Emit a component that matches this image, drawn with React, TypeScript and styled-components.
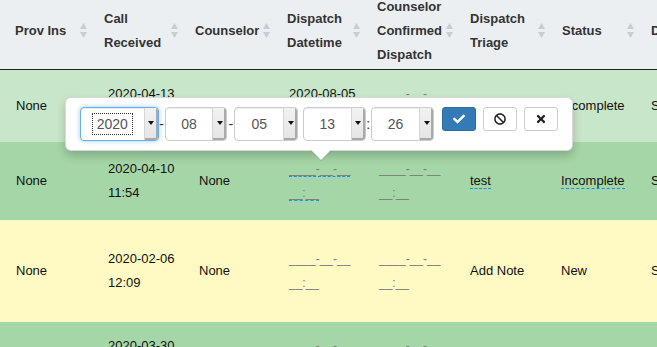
import { Fragment } from 'react';
import styled, { createGlobalStyle } from 'styled-components';
import { FaBan, FaCheck, FaTimes } from 'react-icons/fa';

const GlobalStyle = createGlobalStyle`
  html, body {
    margin: 0;
    padding: 0;
    overflow: hidden;
    background: #fff;
    font-family: 'Liberation Sans', Arial, Helvetica, sans-serif;
  }
`;

const Page = styled.div`
  position: relative;
  width: 100%;
`;

const HeaderRow = styled.div`
  display: grid;
  grid-template-columns: 92px 91px 92px 90px 93px 92px 89px 1fr;
  grid-template-rows: 69px;
  height: 70px;
  box-sizing: border-box;
  background: #eceff1;
  border-bottom: 1px solid #222;
`;

const HeaderCell = styled.div<{ $first?: boolean }>`
  display: flex;
  align-items: center;
  justify-content: space-between;
  min-height: 0;
  padding: 0 5px 8px ${(p) => (p.$first ? 15 : 12)}px;
  font-size: 13px;
  font-weight: 700;
  line-height: 24px;
  color: #333;
  white-space: nowrap;
  overflow: visible;
`;

const BodyRow = styled.div<{ $bg: string; $h: number }>`
  display: grid;
  grid-template-columns: 96px 91px 90px 90px 91px 91px 90px 1fr;
  grid-template-rows: ${(p) => p.$h}px;
  background: ${(p) => p.$bg};
`;

const Cell = styled.div<{ $first?: boolean }>`
  display: flex;
  align-items: center;
  padding-left: ${(p) => (p.$first ? 16 : 12)}px;
  font-size: 13px;
  line-height: 24px;
  color: #111;
  white-space: nowrap;
  overflow: hidden;
`;

const Placeholder = styled.span<{ $editable?: boolean }>`
  font-size: 12px;
  color: #7a7a7a;
  border-bottom: ${(p) => (p.$editable ? '1px dashed #1a8cf0' : 'none')};
`;

const Editable = styled.span`
  border-bottom: 1px dashed #1a8cf0;
`;

const Popover = styled.div`
  position: absolute;
  top: 97px;
  left: 65px;
  width: 508px;
  height: 54px;
  box-sizing: border-box;
  padding: 9px 14px;
  background: #fff;
  border: 1px solid rgba(0, 0, 0, 0.15);
  border-radius: 6px;
  box-shadow: 0 5px 10px rgba(0, 0, 0, 0.2);
  display: flex;
  align-items: flex-start;

  &::before {
    content: '';
    position: absolute;
    left: 244px;
    bottom: -11px;
    border-style: solid;
    border-width: 11px 11px 0 11px;
    border-color: rgba(0, 0, 0, 0.12) transparent transparent transparent;
  }

  &::after {
    content: '';
    position: absolute;
    left: 245px;
    bottom: -10px;
    border-style: solid;
    border-width: 10px 10px 0 10px;
    border-color: #fff transparent transparent transparent;
  }
`;

const Select = styled.div<{ $w: number; $focus?: boolean }>`
  display: flex;
  width: ${(p) => p.$w}px;
  height: 34px;
  box-sizing: border-box;
  border: 1px solid ${(p) => (p.$focus ? '#66afe9' : '#ccc')};
  border-radius: 4px;
  overflow: hidden;
  background: #fff;
  box-shadow: ${(p) =>
    p.$focus
      ? 'inset 0 1px 1px rgba(0,0,0,.075), 0 0 5px rgba(102,175,233,.6)'
      : 'inset 0 1px 1px rgba(0,0,0,.075)'};
`;

const SelectValue = styled.span`
  flex: 1;
  display: flex;
  align-items: center;
  justify-content: center;
  font-size: 14px;
  color: #555;
`;

const FocusRing = styled.span<{ $on?: boolean }>`
  padding: 2px 4px;
  outline: ${(p) => (p.$on ? '1px dotted #333' : 'none')};
`;

const SelectArrow = styled.span`
  width: 14px;
  display: flex;
  align-items: center;
  justify-content: center;
  padding-bottom: 2px;
  box-sizing: border-box;
  background: linear-gradient(#f2f2f2, #e4e4e4);
  border-left: 1px solid #d6d6d6;
  box-shadow: inset -2px -2px 0 #a9a9a9;

  &::after {
    content: '';
    border-style: solid;
    border-width: 4px 3px 0 3px;
    border-color: #111 transparent transparent transparent;
  }
`;

const Sep = styled.span<{ $w: number }>`
  width: ${(p) => p.$w}px;
  height: 34px;
  display: flex;
  align-items: center;
  justify-content: center;
  font-size: 14px;
  color: #333;
`;

const Btn = styled.button<{ $primary?: boolean }>`
  width: 34px;
  height: 24px;
  margin-left: ${(p) => (p.$primary ? 8 : 7)}px;
  padding: 0;
  display: flex;
  align-items: center;
  justify-content: center;
  border-radius: 3px;
  border: 1px solid ${(p) => (p.$primary ? '#2e6da4' : '#ccc')};
  background: ${(p) => (p.$primary ? '#337ab7' : '#fff')};
  color: ${(p) => (p.$primary ? '#fff' : '#222')};
`;

const SortIcon = () => (
  <svg width="7" height="15" viewBox="0 0 7 15">
    <polygon points="3.5,0 7,6 0,6" fill="#c9cdd0" />
    <polygon points="0,9 7,9 3.5,15" fill="#c9cdd0" />
  </svg>
);

const headers = [
  ['Prov Ins'],
  ['Call', 'Received'],
  ['Counselor'],
  ['Dispatch', 'Datetime'],
  ['Counselor', 'Confirmed', 'Dispatch'],
  ['Dispatch', 'Triage'],
  ['Status'],
  ['Dispatch Notes'],
];

type Row = {
  bg: string;
  h: number;
  call: [string, string];
  dispatch: [string, string] | null;
  dispatchEditable?: boolean;
  triage: string;
  triageEditable?: boolean;
  status: string;
  statusEditable?: boolean;
};

const rows: Row[] = [
  {
    bg: '#c8e6c9',
    h: 72,
    call: ['2020-04-13', '10:02'],
    dispatch: ['2020-08-05', '13:26'],
    triage: 'Add Note',
    status: 'Incomplete',
  },
  {
    bg: '#a5d6a7',
    h: 78,
    call: ['2020-04-10', '11:54'],
    dispatch: null,
    dispatchEditable: true,
    triage: 'test',
    triageEditable: true,
    status: 'Incomplete',
    statusEditable: true,
  },
  {
    bg: '#fff9c4',
    h: 102,
    call: ['2020-02-06', '12:09'],
    dispatch: null,
    triage: 'Add Note',
    status: 'New',
  },
  {
    bg: '#a5d6a7',
    h: 72,
    call: ['2020-03-30', '09:41'],
    dispatch: null,
    triage: 'Add Note',
    status: 'Incomplete',
  },
];

const EmptyDate = ({ editable }: { editable?: boolean }) => (
  <div>
    <Placeholder $editable={editable}>
      ____-__-__
      <br />
      __:__
    </Placeholder>
  </div>
);

const TwoLines = ({ lines }: { lines: [string, string] }) => (
  <div>
    {lines[0]}
    <br />
    {lines[1]}
  </div>
);

const Text = ({ value, editable }: { value: string; editable?: boolean }) => (
  <div>{editable ? <Editable>{value}</Editable> : value}</div>
);

const DateEditor = () => {
  const parts = [
    { v: '2020', w: 79, focus: true, sep: '-', sw: 6 },
    { v: '08', w: 63, sep: '-', sw: 7 },
    { v: '05', w: 64, sep: '', sw: 5 },
    { v: '13', w: 63, sep: ':', sw: 5 },
    { v: '26', w: 64, sep: '', sw: 0 },
  ];
  return (
    <Popover>
      {parts.map((p, i) => (
        <Fragment key={i}>
          <Select $w={p.w} $focus={p.focus}>
            <SelectValue>
              <FocusRing $on={p.focus}>{p.v}</FocusRing>
            </SelectValue>
            <SelectArrow />
          </Select>
          {p.sw > 0 && <Sep $w={p.sw}>{p.sep}</Sep>}
        </Fragment>
      ))}
      <Btn $primary>
        <FaCheck size={12} />
      </Btn>
      <Btn>
        <FaBan size={12} />
      </Btn>
      <Btn>
        <FaTimes size={12} />
      </Btn>
    </Popover>
  );
};

export default function App() {
  return (
    <Page>
      <GlobalStyle />
      <HeaderRow>
        {headers.map((h, i) => (
          <HeaderCell key={i} $first={i === 0}>
            <div>
              {h.map((line, j) => (
                <div key={j}>{line}</div>
              ))}
            </div>
            {i < 7 && <SortIcon />}
          </HeaderCell>
        ))}
      </HeaderRow>
      {rows.map((r, i) => (
        <BodyRow key={i} $bg={r.bg} $h={r.h}>
          <Cell $first>None</Cell>
          <Cell>
            <TwoLines lines={r.call} />
          </Cell>
          <Cell>None</Cell>
          <Cell>
            {r.dispatch ? <TwoLines lines={r.dispatch} /> : <EmptyDate editable={r.dispatchEditable} />}
          </Cell>
          <Cell>
            <EmptyDate />
          </Cell>
          <Cell>
            <Text value={r.triage} editable={r.triageEditable} />
          </Cell>
          <Cell>
            <Text value={r.status} editable={r.statusEditable} />
          </Cell>
          <Cell>Send</Cell>
        </BodyRow>
      ))}
      <DateEditor />
    </Page>
  );
}
